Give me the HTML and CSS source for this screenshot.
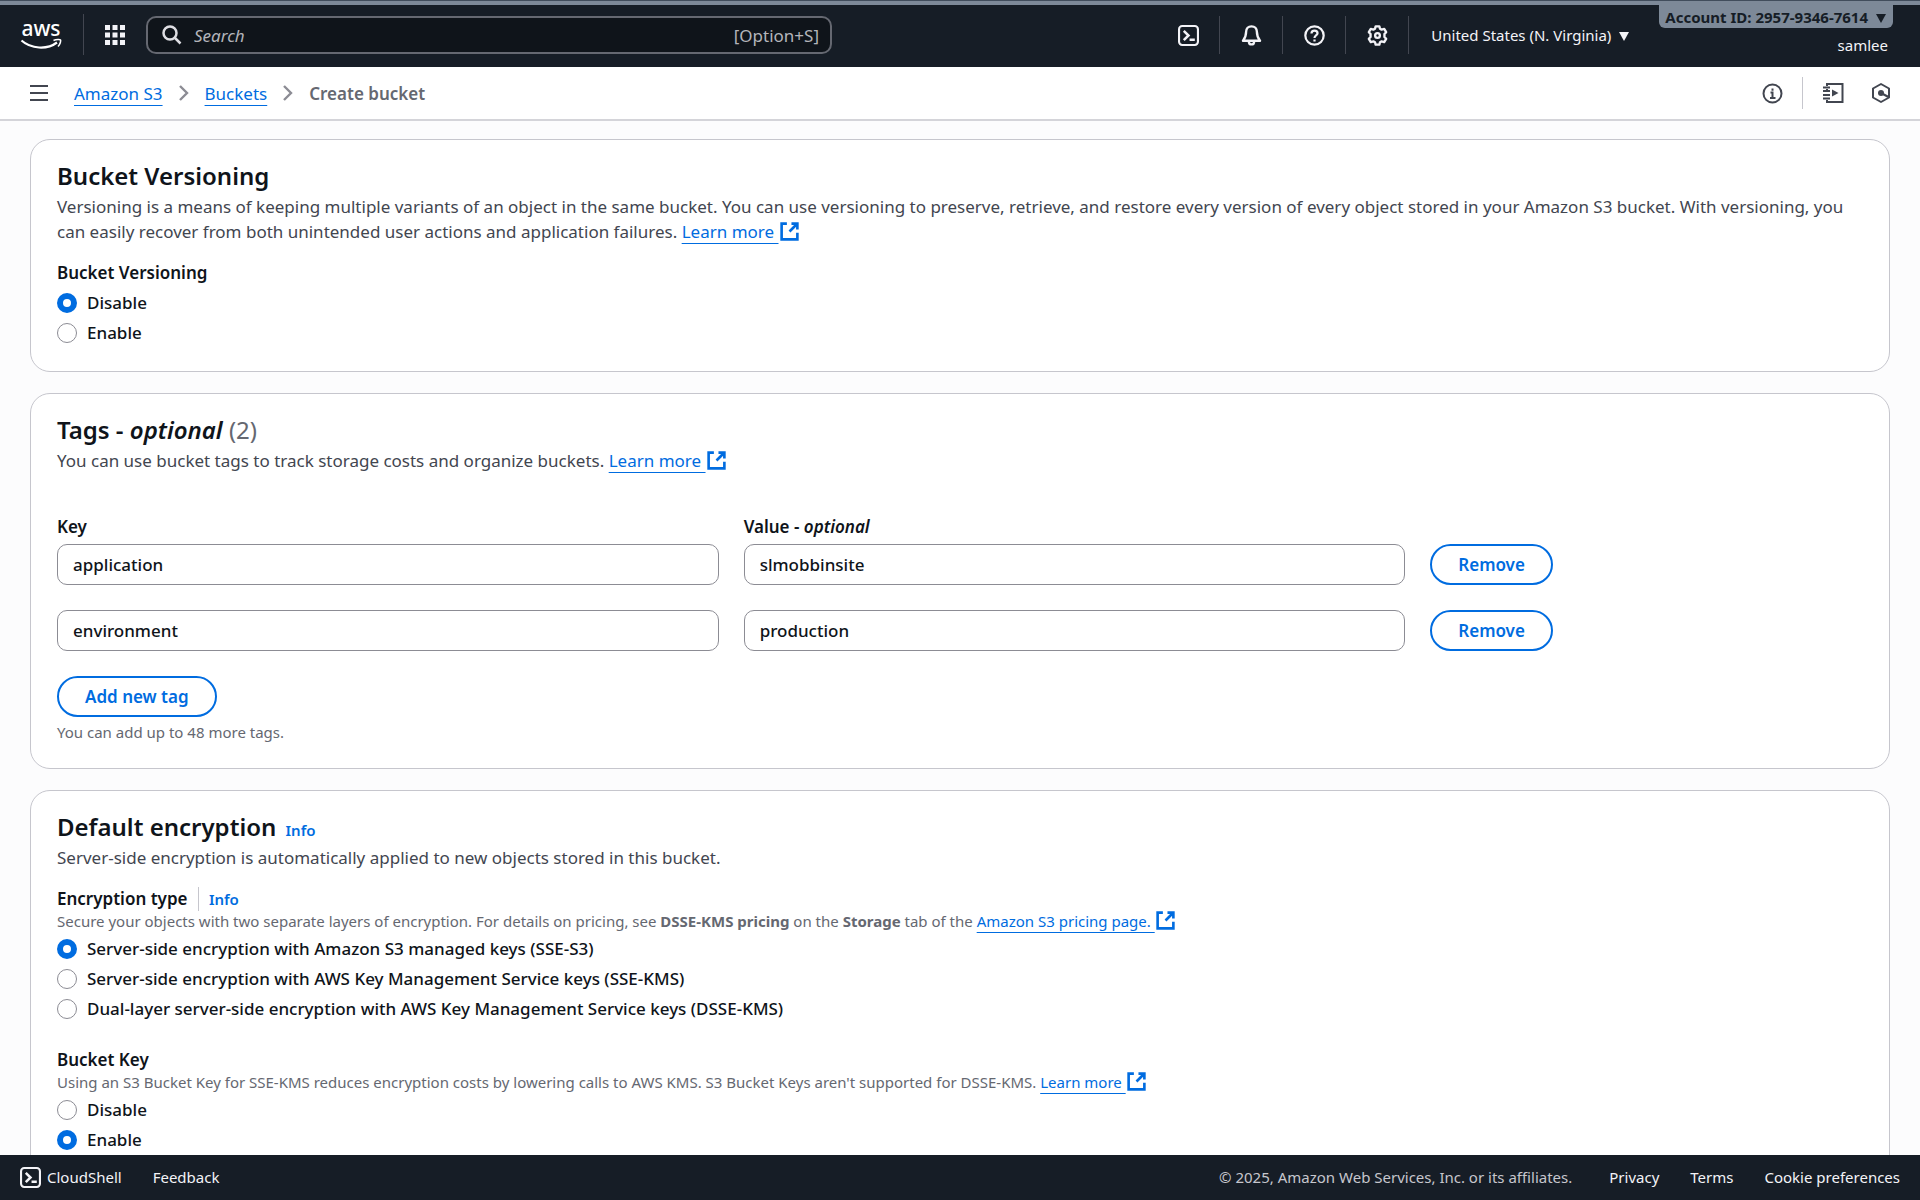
FILE: index.html
```html
<!DOCTYPE html>
<html lang="en">
<head>
<meta charset="utf-8">
<meta name="viewport" content="width=device-width, initial-scale=1">
<title>Create bucket - Amazon S3</title>
<link rel="stylesheet" href="styles.css">
</head>
<body>
<svg class="sprite" aria-hidden="true">
  <symbol id="external" viewBox="0 0 16 16"><path d="M6 2H2v12h12V9M9.500 2H14v4.500M13.500 2.500 8 8" fill="none" stroke="currentColor" stroke-width="2"/></symbol>
  <symbol id="shell" viewBox="0 0 20 20"><rect x="1" y="1" width="18" height="18" rx="3" fill="none" stroke="currentColor" stroke-width="2"/><path d="M5.500 5.500 10 10l-4.500 4.500M11 14h5" fill="none" stroke="currentColor" stroke-width="2.400"/></symbol>
  <symbol id="chevron" viewBox="0 0 12 18"><path d="m2 2 7 7-7 7" fill="none" stroke="currentColor" stroke-width="2.400"/></symbol>
</svg>

<header class="topnav">
  <a class="logo" href="#" aria-label="AWS home">
    <svg width="42" height="32" viewBox="0 0 42 32">
      <text x="21" y="17" text-anchor="middle" class="logo-text">aws</text>
      <path d="M1.500 21.500C11 30 27 31 37 23.500" fill="none" stroke="#fff" stroke-width="2.200"/>
      <path d="M33.500 21.500c3-1.300 6.500-1.300 7-.5s-.3 4.300-2.500 6.500" fill="none" stroke="#fff" stroke-width="1.600"/>
    </svg>
  </a>
  <button class="icon-btn apps" type="button" aria-label="Services">
    <svg width="22" height="22" viewBox="0 0 22 22" fill="currentColor"><path d="M1 1h5v5H1zM8.500 1h5v5h-5zM16 1h5v5h-5zM1 8.500h5v5H1zM8.500 8.500h5v5h-5zM16 8.500h5v5h-5zM1 16h5v5H1zM8.500 16h5v5h-5zM16 16h5v5h-5z"/></svg>
  </button>
  <label class="search">
    <svg width="20" height="20" viewBox="0 0 20 20" fill="none" stroke="currentColor" stroke-width="2.500"><circle cx="8" cy="8" r="6.500"/><path d="m12.500 12.500 6 6"/></svg>
    <input type="search" placeholder="Search" aria-label="Search">
    <span>[Option+S]</span>
  </label>
  <nav class="tools">
    <button class="icon-btn" type="button" aria-label="CloudShell"><svg width="21" height="21"><use href="#shell"/></svg></button>
    <button class="icon-btn" type="button" aria-label="Notifications">
      <svg width="21" height="21" viewBox="0 0 16 16" fill="none" stroke="currentColor" stroke-width="1.800" stroke-linejoin="round"><path d="M8 1C5.500 1 3.900 2.800 3.900 5.200 3.900 8.500 3 10.200 1.500 12h13C13 10.200 12.100 8.500 12.100 5.200 12.100 2.800 10.500 1 8 1z"/><path d="M6 12.500c0 1.500.8 2.300 2 2.300s2-.8 2-2.300"/></svg>
    </button>
    <button class="icon-btn" type="button" aria-label="Help">
      <svg width="21" height="21" viewBox="0 0 16 16" fill="none" stroke="currentColor" stroke-width="1.700"><circle cx="8" cy="8" r="7"/><path d="M5.700 6.500C5.700 5.100 6.700 4.300 8 4.300s2.300.8 2.300 2C10.300 8 8 8 8 9.900M8 11v1.600"/></svg>
    </button>
    <button class="icon-btn" type="button" aria-label="Settings">
      <svg width="21" height="21" viewBox="0 0 16 16" fill="none" stroke="currentColor" stroke-width="1.800" stroke-linejoin="round"><path d="M6.600 1h2.800l.5 1.900 1.200.6 2-.5 1.500 2.500-1.300 1.400v2.200l1.300 1.400-1.500 2.500-2-.5-1.200.6L9.400 15H6.600l-.5-1.900-1.200-.6-2 .5-1.500-2.500 1.300-1.400V6.900L1.400 5.500 2.900 3l2 .5 1.200-.6z"/><circle cx="8" cy="8" r="1.800"/></svg>
    </button>
    <button class="region" type="button">United States (N. Virginia)<i class="caret"></i></button>
  </nav>
  <div class="account">
    <button class="account-id" type="button">Account ID: 2957-9346-7614<i class="caret"></i></button>
    <span class="user">samlee</span>
  </div>
</header>

<div class="crumbbar">
  <button class="icon-btn menu" type="button" aria-label="Open navigation">
    <svg width="18" height="16" viewBox="0 0 18 16" fill="currentColor"><path d="M0 0h18v2H0zM0 7h18v2H0zM0 14h18v2H0z"/></svg>
  </button>
  <nav class="crumbs" aria-label="Breadcrumbs">
    <a href="#">Amazon S3</a>
    <svg width="12" height="18"><use href="#chevron"/></svg>
    <a href="#">Buckets</a>
    <svg width="12" height="18"><use href="#chevron"/></svg>
    <strong>Create bucket</strong>
  </nav>
  <div class="panel-tools">
    <button class="icon-btn" type="button" aria-label="Info">
      <svg width="21" height="21" viewBox="0 0 21 21" fill="none" stroke="currentColor" stroke-width="2"><circle cx="10.500" cy="10.500" r="9"/><path d="M8.500 9.500h2V15M8 15h5.500M10.500 5.500v2.200"/></svg>
    </button>
    <span class="rule"></span>
    <button class="icon-btn" type="button" aria-label="Tutorials">
      <svg width="22" height="22" viewBox="0 0 22 22" fill="none" stroke="currentColor" stroke-width="2"><path d="M5 4V2h15.500v18H5v-2M5 7v1M5 12v1"/><path d="M1 5.500h7M1 9h7M1 13h7M1 16.500h7" stroke-width="1.800"/><path d="m10 7.500 6.500 3.500-6.500 3.500z" fill="currentColor" stroke="none"/></svg>
    </button>
    <button class="icon-btn" type="button" aria-label="Resource explorer">
      <svg width="20" height="22" viewBox="0 0 20 22" fill="none" stroke="currentColor" stroke-width="2"><path d="m10 2 8 4.500v9L10 20l-8-4.500v-9z" stroke-linejoin="round"/><circle cx="10" cy="11" r="3" fill="currentColor" stroke="none"/><path d="m10 11 7.500 4"/></svg>
    </button>
  </div>
</div>

<main class="content">
  <section class="card">
    <h2>Bucket Versioning</h2>
    <p class="desc">Versioning is a means of keeping multiple variants of an object in the same bucket. You can use versioning to preserve, retrieve, and restore every version of every object stored in your Amazon S3 bucket. With versioning, you can easily recover from both unintended user actions and application failures. <a class="ext" href="#">Learn more <svg><use href="#external"/></svg></a></p>
    <fieldset class="group">
      <legend>Bucket Versioning</legend>
      <label class="radio"><input type="radio" name="versioning" checked>Disable</label>
      <label class="radio"><input type="radio" name="versioning">Enable</label>
    </fieldset>
  </section>

  <section class="card">
    <h2>Tags - <em>optional</em> <span class="count">(2)</span></h2>
    <p class="desc">You can use bucket tags to track storage costs and organize buckets. <a class="ext" href="#">Learn more <svg><use href="#external"/></svg></a></p>
    <div class="tags">
      <label for="key1">Key</label>
      <label class="value-label" for="value1">Value - <em>optional</em></label>
      <input id="key1" type="text" value="application">
      <input id="value1" type="text" value="slmobbinsite">
      <button class="btn" type="button">Remove</button>
      <input type="text" value="environment" aria-label="Key">
      <input type="text" value="production" aria-label="Value">
      <button class="btn" type="button">Remove</button>
    </div>
    <button class="btn" type="button">Add new tag</button>
    <p class="hint tag-limit">You can add up to 48 more tags.</p>
  </section>

  <section class="card">
    <h2>Default encryption <a class="info" href="#">Info</a></h2>
    <p class="desc">Server-side encryption is automatically applied to new objects stored in this bucket.</p>
    <fieldset class="group">
      <legend>Encryption type <a class="info ruled" href="#">Info</a></legend>
      <p class="hint">Secure your objects with two separate layers of encryption. For details on pricing, see <b>DSSE-KMS pricing</b> on the <b>Storage</b> tab of the <a class="ext" href="#">Amazon S3 pricing page. <svg><use href="#external"/></svg></a></p>
      <label class="radio"><input type="radio" name="encryption" checked>Server-side encryption with Amazon S3 managed keys (SSE-S3)</label>
      <label class="radio"><input type="radio" name="encryption">Server-side encryption with AWS Key Management Service keys (SSE-KMS)</label>
      <label class="radio"><input type="radio" name="encryption">Dual-layer server-side encryption with AWS Key Management Service keys (DSSE-KMS)</label>
    </fieldset>
    <fieldset class="group spaced">
      <legend>Bucket Key</legend>
      <p class="hint">Using an S3 Bucket Key for SSE-KMS reduces encryption costs by lowering calls to AWS KMS. S3 Bucket Keys aren't supported for DSSE-KMS. <a class="ext" href="#">Learn more <svg><use href="#external"/></svg></a></p>
      <label class="radio"><input type="radio" name="bucketkey">Disable</label>
      <label class="radio"><input type="radio" name="bucketkey" checked>Enable</label>
    </fieldset>
  </section>
</main>

<footer class="footer">
  <a class="shell" href="#"><svg width="21" height="21"><use href="#shell"/></svg>CloudShell</a>
  <a href="#">Feedback</a>
  <span class="copyright">© 2025, Amazon Web Services, Inc. or its affiliates.</span>
  <a href="#">Privacy</a>
  <a href="#">Terms</a>
  <a href="#">Cookie preferences</a>
</footer>
</body>
</html>
```
FILE: styles.css
```css
* { box-sizing: border-box; }

body {
  margin: 0;
  height: 100vh;
  display: flex;
  flex-direction: column;
  overflow: hidden;
  border-top: 1px solid #414d5c;
  background: #fcfcfd;
  color: #0f141a;
  font: 17px/25px "Noto Sans", "Open Sans", sans-serif;
}

button, input { font: inherit; color: inherit; }
a { color: #006ce0; }
p, h2, fieldset { margin: 0; padding: 0; border: 0; }
svg { display: block; flex: none; }
.sprite { position: absolute; width: 0; height: 0; }

.icon-btn {
  display: flex;
  align-items: center;
  justify-content: center;
  padding: 0;
  border: 0;
  background: none;
}

.caret {
  display: inline-block;
  margin-left: 8px;
  border: 5px solid transparent;
  border-top: 9px solid currentColor;
  border-bottom: 0;
}

/* Top navigation */
.topnav {
  flex: none;
  display: flex;
  align-items: stretch;
  height: 66px;
  border-top: 4px solid #7d8998;
  background: #161d26;
  color: #f3f3f7;
  font-size: 15px;
}

.logo {
  display: flex;
  align-items: center;
  margin: 9px 0 12px;
  padding: 0 21px 0 20px;
  border-right: 1px solid #424650;
}
.logo-text { font: 500 21px "Noto Sans", sans-serif; fill: #fff; }
.apps { margin-bottom: 3px; padding: 0 20px; }

.search {
  display: flex;
  align-items: center;
  gap: 12px;
  width: 686px;
  margin: 11px 0 13px;
  padding: 0 11px 0 14px;
  border: 2px solid #656871;
  border-radius: 10px;
  background: #0f141a;
  color: #b4b4bb;
  font-size: 17px;
}
.search svg { color: #dedee3; }
.search input {
  flex: 1;
  min-width: 0;
  padding: 0;
  border: 0;
  outline: 0;
  background: none;
}
.search input::placeholder { color: #b4b4bb; font-style: italic; }

.tools {
  display: flex;
  align-items: stretch;
  margin: 11px 0 13px auto;
}
.tools .icon-btn { width: 63px; border-right: 1px solid #424650; }
.region {
  padding: 0 30px 0 22px;
  border: 0;
  background: none;
}

.account {
  display: flex;
  flex-direction: column;
  align-items: flex-end;
  margin-right: 27px;
}
.account-id {
  height: 23px;
  padding: 1px 7px 0 6px;
  border: 0;
  border-radius: 0 0 6px 6px;
  background: #7d8998;
  color: #161d26;
  font-weight: 700;
  line-height: 22px;
}
.user { margin: 5px 5px 0 0; }

/* Breadcrumb bar */
.crumbbar {
  flex: none;
  display: flex;
  align-items: center;
  height: 54px;
  padding: 0 29px 0 30px;
  border-bottom: 2px solid #d4d4d9;
  background: #fff;
  color: #424650;
}
.crumbs { display: flex; align-items: center; gap: 15px; margin-left: 26px; color: #8c8c94; }
.crumbs a, .ext { text-underline-offset: 5px; text-decoration-thickness: 1px; text-decoration-skip-ink: none; }
.crumbs strong { color: #656871; font-weight: 600; }
.panel-tools { display: flex; align-items: center; gap: 19px; margin-left: auto; }
.panel-tools .rule { width: 1px; height: 32px; background: #c6c6cd; }
.panel-tools .icon-btn:last-child { margin-left: 8px; }

/* Content */
.content {
  flex: 1;
  min-height: 0;
  display: flex;
  flex-direction: column;
  gap: 21px;
  padding: 18px 30px 0;
  overflow: hidden;
}
.card {
  flex: none;
  padding: 21px 26px 26px;
  border: 1px solid #c6c6cd;
  border-radius: 20px;
  background: #fff;
}
h2 { font-size: 24px; line-height: 30px; font-weight: 600; }
.count { color: #656871; font-weight: 400; }
.desc { margin-top: 3px; color: #424650; }
.hint { color: #656871; font-size: 15px; line-height: 20px; }

.ext svg {
  display: inline-block;
  width: 21px;
  height: 21px;
  margin-top: -5px;
  vertical-align: -4px;
}
.info { margin-left: 3px; font-size: 15px; line-height: 20px; font-weight: 600; text-decoration: none; }
.info.ruled {
  display: inline-block;
  margin-left: 6px;
  padding-left: 10px;
  border-left: 1px solid #c6c6cd;
  line-height: 24px;
}

.group { display: grid; margin-top: 16px; }
.group.spaced { margin-top: 26px; }
legend { height: 25px; padding: 0; font-weight: 600; }
.radio { display: flex; align-items: center; gap: 10px; margin-top: 5px; font-weight: 500; }
.radio input {
  appearance: none;
  flex: none;
  width: 20px;
  height: 20px;
  margin: 0;
  border: 1px solid #8c8c94;
  border-radius: 50%;
  background: #fff;
}
.radio input:checked { border: 6px solid #006ce0; }

/* Tag editor: key and value take three of eight columns each */
.tags {
  display: grid;
  grid-template-columns: repeat(8, 1fr);
  column-gap: 25px;
  row-gap: 25px;
  margin: 41px 0 25px;
}
.tags label { grid-column: span 3; margin-bottom: -20px; font-weight: 600; }
.tags .value-label { grid-column: 4 / span 5; }
.tags input {
  grid-column: span 3;
  min-width: 0;
  height: 41px;
  padding: 0 15px;
  border: 1px solid #8c8c94;
  border-radius: 10px;
  background: #fff;
  font-weight: 500;
}
.tags .btn { grid-column: span 2; justify-self: start; }

.btn {
  height: 41px;
  padding: 0 26px;
  border: 2px solid #006ce0;
  border-radius: 21px;
  background: #fff;
  color: #006ce0;
  font-weight: 600;
}
.tag-limit { margin-top: 5px; }

/* Footer */
.footer {
  flex: none;
  display: flex;
  align-items: center;
  gap: 31px;
  height: 45px;
  padding: 0 20px;
  background: #161d26;
  color: #c6c6cd;
  font-size: 15px;
}
.footer a { color: #f3f3f7; text-decoration: none; }
.shell { display: flex; align-items: center; gap: 6px; }
.copyright { margin: 0 6px 0 auto; }
```
